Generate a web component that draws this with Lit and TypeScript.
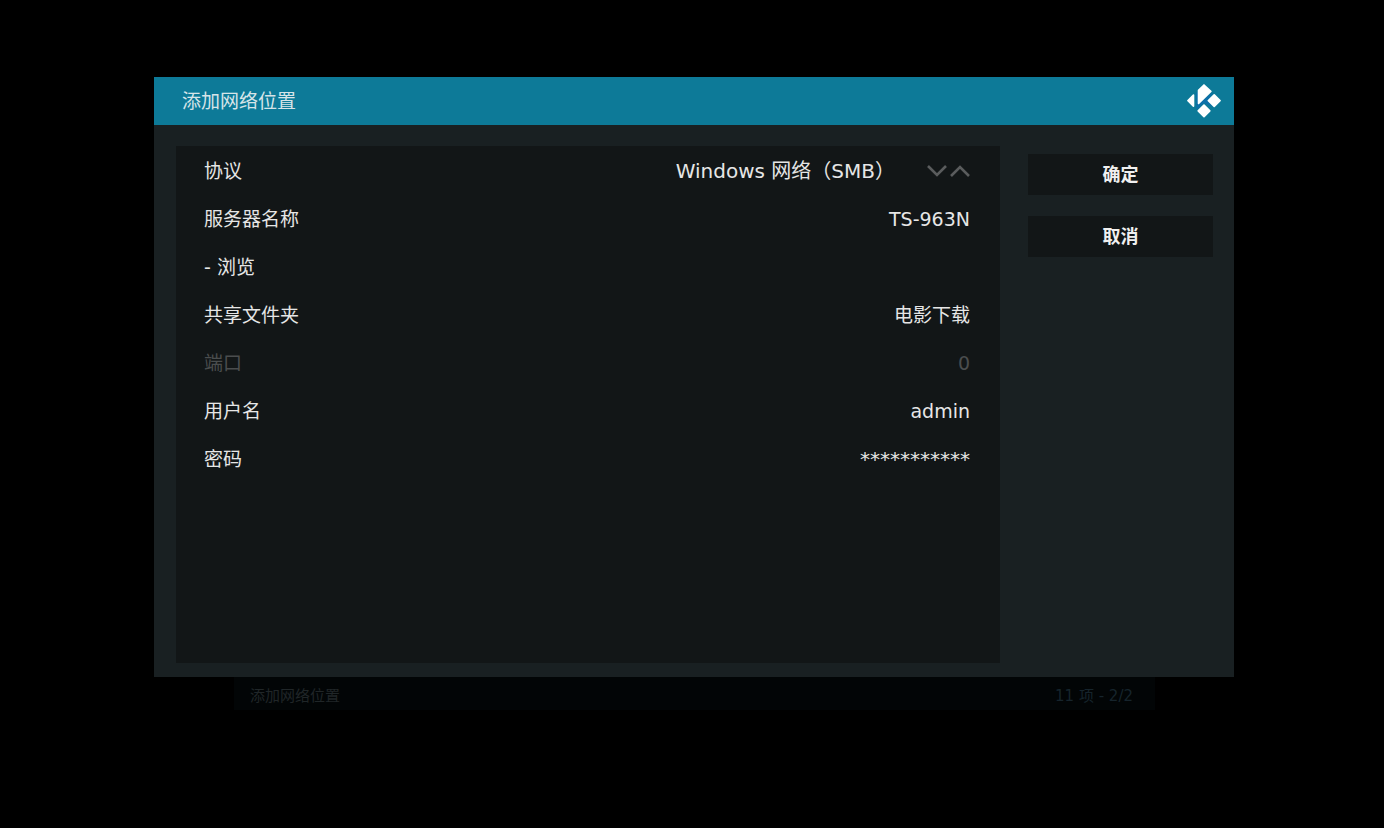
import { LitElement, html, css } from "lit";
import { customElement, state } from "lit/decorators.js";

interface Field {
  id: string;
  label: string;
  value: string;
  disabled?: boolean;
  masked?: boolean;
}

const PROTOCOLS = ["Windows 网络（SMB）"];

const SERVER: Field = { id: "server", label: "服务器名称", value: "TS-963N" };

const FIELDS: Field[] = [
  { id: "share", label: "共享文件夹", value: "电影下载" },
  { id: "port", label: "端口", value: "0", disabled: true },
  { id: "user", label: "用户名", value: "admin" },
  { id: "password", label: "密码", value: "***********", masked: true },
];

@customElement("app-root")
export class AppRoot extends LitElement {
  static styles = css`
    :host {
      display: block;
      min-height: 100vh;
      box-sizing: border-box;
      background: #000;
      color: #e6e6e6;
      font-family: "DejaVu Sans", "Noto Sans CJK SC", sans-serif;
      font-size: 19px;
      line-height: 24px;
    }
    .screen {
      padding: 77px 150px 0 154px;
    }
    .dialog {
      background: #192022;
    }
    .header {
      display: flex;
      align-items: center;
      justify-content: space-between;
      height: 48px;
      padding: 0 13px 0 28px;
      background: #0d7a98;
    }
    .title {
      margin: 0;
      font-size: 19px;
      font-weight: 400;
      color: #d6e4e8;
    }
    .logo {
      width: 34px;
      height: 34px;
    }
    .content {
      display: flex;
      gap: 28px;
      padding: 21px 21px 14px 22px;
    }
    .settings {
      flex: 1;
      min-width: 0;
      min-height: 517px;
      box-sizing: border-box;
      padding: 1px 30px 0 28px;
      background: #121617;
    }
    .row {
      display: flex;
      align-items: center;
      justify-content: space-between;
      height: 48px;
    }
    button,
    input,
    select {
      margin: 0;
      padding: 0;
      border: 0;
      outline: 0;
      border-radius: 0;
      background: none;
      color: inherit;
      font: inherit;
      appearance: none;
    }
    .value {
      flex: 1;
      min-width: 0;
      text-align: right;
    }
    .masked {
      font-size: 20px;
    }
    .protocol {
      display: flex;
      align-items: center;
      gap: 32px;
    }
    .select {
      font-size: 20px;
      text-align-last: right;
    }
    .spinner {
      display: flex;
      gap: 3px;
    }
    .arrow {
      display: flex;
      width: 20px;
      height: 24px;
      align-items: center;
      justify-content: center;
    }
    .arrow svg {
      width: 20px;
      height: 12px;
      fill: none;
      stroke: #5a5c5d;
      stroke-width: 2.6;
    }
    .disabled {
      color: #4a4d4e;
    }
    .actions {
      display: flex;
      flex-direction: column;
      gap: 21px;
      width: 185px;
      padding-top: 8px;
    }
    .action {
      height: 41px;
      background: #121617;
      color: #f0f0f0;
      font-size: 18px;
      font-weight: 700;
      text-align: center;
    }
    .status {
      display: flex;
      align-items: center;
      justify-content: space-between;
      height: 33px;
      margin: 0 79px 0 80px;
      padding: 4px 22px 0 16px;
      box-sizing: border-box;
      background: #020506;
      color: #202628;
      font-size: 15px;
    }
    .count {
      color: #16242c;
    }
  `;

  @state() private protocol = 0;

  private step(delta: number) {
    this.protocol = (this.protocol + delta + PROTOCOLS.length) % PROTOCOLS.length;
  }

  private renderField(f: Field) {
    return html`
      <div class="row ${f.disabled ? "disabled" : ""}">
        <label for=${f.id}>${f.label}</label>
        <input
          class="value ${f.masked ? "masked" : ""}"
          id=${f.id}
          type="text"
          autocomplete="off"
          spellcheck="false"
          .value=${f.value}
          ?disabled=${f.disabled}
        />
      </div>
    `;
  }

  render() {
    return html`
      <main class="screen">
        <form class="dialog" role="dialog" aria-labelledby="title" @submit=${(e: Event) => e.preventDefault()}>
          <header class="header">
            <h1 class="title" id="title">添加网络位置</h1>
            <svg class="logo" viewBox="0 0 100 100" aria-hidden="true">
              <path fill="#0c6fa9" d="M26 28L32 22V62L60 36L78 24L60 49L76 68L50 56L28 76Z" />
              <g fill="#fff" stroke="#fff" stroke-width="5" stroke-linejoin="round">
                <path d="M50 3L70 22L34 57V19Z" />
                <path d="M3 49L19 33V65Z" />
                <path d="M80 32L97 49L80 66L63 49Z" />
                <path d="M50 62L67 79L50 96L33 79Z" />
              </g>
            </svg>
          </header>
          <div class="content">
            <section class="settings">
              <div class="row">
                <label for="protocol">协议</label>
                <div class="protocol">
                  <select class="select" id="protocol" .selectedIndex=${this.protocol}>
                    ${PROTOCOLS.map((p) => html`<option>${p}</option>`)}
                  </select>
                  <div class="spinner">
                    <button class="arrow" type="button" aria-label="下一个" @click=${() => this.step(1)}>
                      <svg viewBox="0 0 20 12"><path d="M1 1L10 10L19 1" /></svg>
                    </button>
                    <button class="arrow" type="button" aria-label="上一个" @click=${() => this.step(-1)}>
                      <svg viewBox="0 0 20 12"><path d="M1 11L10 2L19 11" /></svg>
                    </button>
                  </div>
                </div>
              </div>
              ${this.renderField(SERVER)}
              <div class="row"><button type="button">- 浏览</button></div>
              ${FIELDS.map((f) => this.renderField(f))}
            </section>
            <div class="actions">
              <button class="action" type="submit">确定</button>
              <button class="action" type="button">取消</button>
            </div>
          </div>
        </form>
        <footer class="status">
          <span>添加网络位置</span>
          <span class="count">11 项 - 2/2</span>
        </footer>
      </main>
    `;
  }
}
